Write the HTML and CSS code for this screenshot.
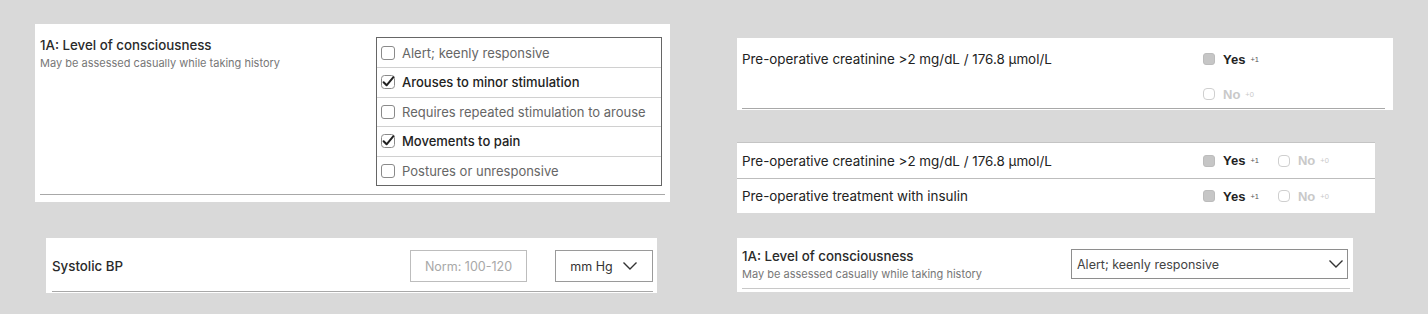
FILE: index.html
```html
<!DOCTYPE html>
<html lang="en">
<head>
    <meta charset="UTF-8">
    <meta name="viewport" content="width=device-width, initial-scale=1.0">
    <title>Calculator Input Components</title>
    <link rel="stylesheet" href="styles.css">
</head>
<body>
    <div class="page">
        <div class="col col-left">
            <!-- checkbox list -->
            <div class="card card-checklist">
                <div class="field-row">
                    <div class="field-label">
                        <div class="title">1A: Level of consciousness</div>
                        <div class="sub">May be assessed casually while taking history</div>
                    </div>
                    <div class="check-list">
                        <div class="check-item">
                            <span class="box"></span>
                            <span>Alert; keenly responsive</span>
                        </div>
                        <div class="check-item checked">
                            <svg class="box-svg" width="14" height="14" viewBox="0 0 14 14"><rect x="0.5" y="0.5" width="13" height="13" rx="3" fill="#fff" stroke="#8a8a8a"/><path d="M2.6 7.2 L5.6 10.3 L12.4 2.2" fill="none" stroke="#222" stroke-width="2" stroke-linecap="round" stroke-linejoin="round"/></svg>
                            <span>Arouses to minor stimulation</span>
                        </div>
                        <div class="check-item">
                            <span class="box"></span>
                            <span>Requires repeated stimulation to arouse</span>
                        </div>
                        <div class="check-item checked">
                            <svg class="box-svg" width="14" height="14" viewBox="0 0 14 14"><rect x="0.5" y="0.5" width="13" height="13" rx="3" fill="#fff" stroke="#8a8a8a"/><path d="M2.6 7.2 L5.6 10.3 L12.4 2.2" fill="none" stroke="#222" stroke-width="2" stroke-linecap="round" stroke-linejoin="round"/></svg>
                            <span>Movements to pain</span>
                        </div>
                        <div class="check-item">
                            <span class="box"></span>
                            <span>Postures or unresponsive</span>
                        </div>
                    </div>
                </div>
                <div class="rule rule-wide"></div>
            </div>

            <!-- number input with units -->
            <div class="card card-number">
                <div class="number-row">
                    <div class="title">Systolic BP</div>
                    <div class="number-controls">
                        <input class="num-input" type="text" placeholder="Norm: 100-120">
                        <div class="unit-select">
                            <span>mm Hg</span>
                            <svg width="16" height="10" viewBox="0 0 16 10"><path d="M1.5 1.5 L8 8 L14.5 1.5" fill="none" stroke="#333" stroke-width="1.4"/></svg>
                        </div>
                    </div>
                </div>
                <div class="rule"></div>
            </div>
        </div>

        <div class="col col-right">
            <!-- yes/no stacked -->
            <div class="card card-yesno">
                <div class="yn-label">Pre-operative creatinine &gt;2 mg/dL / 176.8 µmol/L</div>
                <div class="yn-stack">
                    <div class="yn-opt yes"><span class="yn-box filled"></span><b>Yes</b><small>+1</small></div>
                    <div class="yn-opt no"><span class="yn-box"></span><b>No</b><small>+0</small></div>
                </div>
                <div class="rule rule-full"></div>
            </div>

            <!-- yes/no inline -->
            <div class="card card-yesno-inline">
                <div class="yn-row">
                    <div class="yn-label">Pre-operative creatinine &gt;2 mg/dL / 176.8 µmol/L</div>
                    <div class="yn-inline">
                        <div class="yn-opt yes"><span class="yn-box filled"></span><b>Yes</b><small>+1</small></div>
                        <div class="yn-opt no"><span class="yn-box"></span><b>No</b><small>+0</small></div>
                    </div>
                </div>
                <div class="yn-row">
                    <div class="yn-label">Pre-operative treatment with insulin</div>
                    <div class="yn-inline">
                        <div class="yn-opt yes"><span class="yn-box filled"></span><b>Yes</b><small>+1</small></div>
                        <div class="yn-opt no"><span class="yn-box"></span><b>No</b><small>+0</small></div>
                    </div>
                </div>
            </div>

            <!-- dropdown -->
            <div class="card card-dropdown">
                <div class="field-row">
                    <div class="field-label">
                        <div class="title">1A: Level of consciousness</div>
                        <div class="sub">May be assessed casually while taking history</div>
                    </div>
                    <div class="drop-select">
                        <span>Alert; keenly responsive</span>
                        <svg width="16" height="10" viewBox="0 0 16 10"><path d="M1.5 1.5 L8 8 L14.5 1.5" fill="none" stroke="#333" stroke-width="1.4"/></svg>
                    </div>
                </div>
                <div class="rule"></div>
            </div>
        </div>
    </div>
</body>
</html>
```

FILE: styles.css
```css
body {
    margin: 0;
    background: #d9d9d9;
    font-family: 'Inter', 'Liberation Sans', sans-serif;
    color: #222;
}
.page {
    display: flex;
    padding-left: 35px;
}
.col { display: flex; flex-direction: column; }
.col-left { width: 702px; }
.col-right { flex: 1; }

.card { background: white; box-sizing: border-box; }

.title {
    font-weight: 500;
    font-size: 13.3px;
    line-height: 16px;
    color: #2a2a2a;
}
.sub {
    font-size: 11px;
    line-height: 14px;
    color: #777;
    margin-top: 3px;
}
.rule { height: 1px; background: #a8a8a8; }

/* checkbox list card */
.card-checklist {
    margin-top: 24px;
    width: 635px;
    padding: 13px 8px 7px 5px;
}
.field-row { display: flex; justify-content: space-between; align-items: flex-start; }
.check-list {
    width: 286px;
    border: 1px solid #666;
    box-sizing: border-box;
}
.check-item {
    display: flex;
    align-items: center;
    gap: 7px;
    height: 29px;
    padding-left: 4px;
    font-size: 13px;
    color: #666;
    box-sizing: border-box;
}
.check-item + .check-item { border-top: 1px solid #d0d0d0; height: 29.5px; }
.check-item.checked { color: #222; font-weight: 500; }
.box {
    width: 12px;
    height: 12px;
    border: 1px solid #8a8a8a;
    border-radius: 3px;
    flex: none;
}
.box-svg { flex: none; }
.rule-wide { margin-top: 8px; margin-right: -3px; }

/* number card */
.card-number {
    margin-top: 36px;
    margin-left: 11px;
    width: 611px;
    padding: 12px 4px 1px 6px;
}
.number-row { display: flex; justify-content: space-between; align-items: center; }
.number-controls { display: flex; gap: 28px; }
.num-input {
    width: 117px;
    height: 32px;
    box-sizing: border-box;
    border: 1px solid #bdbdbd;
    border-radius: 0;
    font-family: 'Inter', sans-serif;
    font-size: 12.5px;
    text-align: center;
    padding: 0;
    outline: none;
}
.num-input::placeholder { color: #a8a8a8; }
.unit-select {
    width: 98px;
    height: 32px;
    box-sizing: border-box;
    border: 1px solid #9a9a9a;
    display: flex;
    align-items: center;
    justify-content: center;
    gap: 9px;
    font-size: 12.5px;
    color: #333;
}
.card-number .rule { margin-top: 9px; }

/* yes / no */
.yn-label { font-size: 13.4px; color: #222; }
.yn-opt {
    display: flex;
    align-items: center;
    font-family: 'Liberation Sans', 'Arial', sans-serif;
}
.yn-opt b { font-size: 13px; margin-left: 8px; }
.yn-opt small { font-size: 7.5px; margin-left: 5px; color: #555; }
.yn-opt.no b, .yn-opt.no small { color: #c9c9c9; }
.yn-box {
    width: 12px;
    height: 12px;
    box-sizing: border-box;
    border: 1px solid #cfcfcf;
    border-radius: 4px;
}
.yn-box.filled { background: #c6c6c6; border-color: #bcbcbc; border-radius: 3px; }

.card-yesno {
    margin-top: 38px;
    width: 656px;
    padding: 13px 8px 1px 5px;
    display: grid;
    grid-template-columns: 461px 1fr;
}
.yn-stack { display: flex; flex-direction: column; gap: 19px; }
.yn-stack .yn-opt { height: 16px; }
.rule-full { grid-column: 1 / 3; margin-top: 6px; }

.card-yesno-inline {
    margin-top: 32px;
    width: 638px;
    border-top: 1px solid #c4c4c4;
}
.yn-row {
    display: grid;
    grid-template-columns: 461px 1fr;
    align-items: center;
    height: 35px;
    padding-left: 5px;
}
.yn-row + .yn-row { border-top: 1px solid #bdbdbd; height: 34px; }
.yn-inline { display: flex; gap: 19px; }

/* dropdown card */
.card-dropdown {
    margin-top: 25px;
    width: 616px;
    padding: 10px 3px 3px 5px;
}
.drop-select {
    width: 277px;
    height: 30px;
    margin-top: 1px;
    margin-right: 2px;
    box-sizing: border-box;
    border: 1px solid #8e8e8e;
    display: flex;
    align-items: center;
    justify-content: space-between;
    padding: 0 3px 0 5px;
    font-size: 12.5px;
    color: #444;
}
.card-dropdown .rule { margin-top: 7px; background: #c8c8c8; }
```
